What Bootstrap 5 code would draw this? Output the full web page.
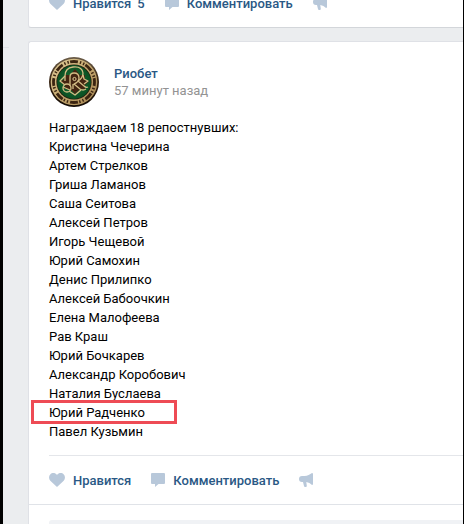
<!DOCTYPE html>
<html lang="ru">
<head>
<meta charset="utf-8">
<meta name="viewport" content="width=device-width, initial-scale=1">
<title>Риобет</title>
<link href="https://cdn.jsdelivr.net/npm/bootstrap@5.3.0/dist/css/bootstrap.min.css" rel="stylesheet">
<style>
body{font-family:Roboto,"Noto Sans",sans-serif;font-size:13px;line-height:19px;color:#000;background:#ebedef}
.feed-frame{height:100vh;border-left:3px solid #000;border-right:1px solid #000}
.side-rail{width:25px}
.rail-line{width:6px;height:1px;margin-top:47px;background:#dfe1e5}
.post{background:#fff;border:1px solid #dfe1e6;border-right:0;border-radius:3px 0 0 3px}
.post-prev{margin-top:-21px;border-top:0;border-bottom-color:#d3d6da;border-radius:0 0 0 3px}
.post-next{margin-top:13px;border-bottom:0;border-bottom-left-radius:0}
.pad-x{padding-left:20px}
.post-head{padding-top:15px;gap:15px}
.author{line-height:17px}
.author a,.act{color:#2a5885;font-weight:500;text-decoration:none}
.author time{color:#939393}
.post-text{margin:11px 0 14px}
.picked{position:relative}
.picked::after{content:"";position:absolute;left:-18px;top:-3px;width:146px;height:24px;border:3px solid #ee4b55}
.rule{border-top:1px solid #e4e6ea}
.acts{gap:20px}
.act{height:48px;background:none;border:0;padding:0;line-height:19px}
.act svg{fill:#b8c8da;flex:none}
.like-label{gap:6px}
.replies{border-top:1px solid #e0e3e8;padding-top:15px}
.reply-box{height:40px;background:#f0f2f5;border:0;border-radius:3px 0 0 0}
</style>
<script src="https://cdn.jsdelivr.net/npm/bootstrap@5.3.0/dist/js/bootstrap.bundle.min.js"></script>
</head>
<body>
<svg class="d-none" aria-hidden="true">
<symbol id="heart" viewBox="0 0 16 14"><path d="M8 14 1.3 7.7C-.4 5.800-.3 2.900 1.200 1.400 3-.4 6.200-.4 8 2c1.800-2.400 5-2.400 6.800-.6 1.500 1.500 1.600 4.400-.1 6.300Z"/></symbol>
<symbol id="bubble" viewBox="0 0 14 14"><path d="M1 0h12q1 0 1 1v9q0 1-1 1H7.500L4 14v-3H1q-1 0-1-1V1q0-1 1-1Z"/></symbol>
<symbol id="horn" viewBox="0 0 14 14"><path d="M13 0q1 0 1 1v10q0 1-1 1C11.500 10.700 9.500 9.500 7.300 9.100L7.800 13q0 1-1 1H6Q5.200 14 5 13L4 9H3Q0 9 0 6t3-3h2.500C8.500 2.900 11 1.500 13 0Z"/></symbol>
</svg>
<div class="feed-frame d-flex overflow-hidden">
<div class="side-rail flex-shrink-0"><div class="rail-line"></div></div>
<main class="flex-grow-1">
<article class="post post-prev pad-x">
<div class="acts d-flex align-items-center">
<button class="act d-flex align-items-center gap-2" type="button"><svg width="16" height="14"><use href="#heart"/></svg><span class="like-label d-flex"><span>Нравится</span><span>5</span></span></button>
<button class="act d-flex align-items-center gap-2" type="button"><svg width="14" height="14"><use href="#bubble"/></svg>Комментировать</button>
<button class="act d-flex align-items-center" type="button" aria-label="Поделиться"><svg width="14" height="14"><use href="#horn"/></svg></button>
</div>
</article>
<article class="post post-next">
<div class="pad-x">
<header class="post-head d-flex align-items-center">
<svg width="50" height="50" viewBox="0 0 50 50" role="img" aria-label="Риобет">
<defs><radialGradient id="felt"><stop offset="0" stop-color="#19753a"/><stop offset="1" stop-color="#0b4f22"/></radialGradient><linearGradient id="gold" x2="1" y2="1"><stop stop-color="#e0cc98"/><stop offset=".5" stop-color="#c4a870"/><stop offset="1" stop-color="#a38350"/></linearGradient><linearGradient id="rim" x2="0" y2="1"><stop stop-color="#6b5c48"/><stop offset=".5" stop-color="#35210f"/><stop offset="1" stop-color="#120a04"/></linearGradient></defs>
<circle cx="25" cy="25" r="25" fill="url(#rim)"/>
<circle cx="25" cy="25" r="23.300" fill="url(#gold)"/>
<circle cx="25" cy="25" r="20.500" fill="none" stroke="#3b2411" stroke-width="2.800" pathLength="96" stroke-dasharray="6 1.500 1 1.500 1 1" stroke-dashoffset="3"/>
<circle cx="25" cy="25" r="17.600" fill="#26180b"/>
<circle cx="25" cy="25" r="16.900" fill="url(#felt)"/>
<path d="m26 12 5 6h5v4l4 2.500-4 3.500v4h-5l-5 5-5-5h-5v-4l-5-3.500 5-2.500v-4h5Z" fill="#432511"/>
<g fill="none" stroke="#d3bd85" stroke-width="1.300" stroke-linejoin="round"><path d="M16 24v-5q0-8 8-9 9-1 10 6 0 5-5 8l6 5q2 2 4 1"/><path d="M16 19l-5 5 5 4M34 18l1 4 4 2-4 3M20 34l6 4 6-5"/><circle cx="18" cy="31" r="4"/><path d="M21 29v-9q0-4 4-4 5 0 5 5 0 4-5 6l6 5q3 2 6 0M14 30l7 3M24 27v5"/></g>
<circle cx="25.500" cy="22" r="1.600" fill="none" stroke="#e0cc98"/>
</svg>
<div class="author d-flex flex-column"><a href="#">Риобет</a><time>57 минут назад</time></div>
</header>
<div class="post-text">
<div>Награждаем 18 репостнувших:</div>
<div>Кристина Чечерина</div>
<div>Артем Стрелков</div>
<div>Гриша Ламанов</div>
<div>Саша Сеитова</div>
<div>Алексей Петров</div>
<div>Игорь Чещевой</div>
<div>Юрий Самохин</div>
<div>Денис Прилипко</div>
<div>Алексей Бабоочкин</div>
<div>Елена Малофеева</div>
<div>Рав Краш</div>
<div>Юрий Бочкарев</div>
<div>Александр Коробович</div>
<div>Наталия Буслаева</div>
<div class="picked">Юрий Радченко</div>
<div>Павел Кузьмин</div>
</div>
<div class="acts rule d-flex align-items-center">
<button class="act d-flex align-items-center gap-2" type="button"><svg width="16" height="14"><use href="#heart"/></svg><span>Нравится</span></button>
<button class="act d-flex align-items-center gap-2" type="button"><svg width="14" height="14"><use href="#bubble"/></svg>Комментировать</button>
<button class="act d-flex align-items-center" type="button" aria-label="Поделиться"><svg width="14" height="14"><use href="#horn"/></svg></button>
</div>
</div>
<div class="replies pad-x"><input class="reply-box d-block w-100" type="text" aria-label="Комментарий"></div>
</article>
</main>
</div>
</body>
</html>
